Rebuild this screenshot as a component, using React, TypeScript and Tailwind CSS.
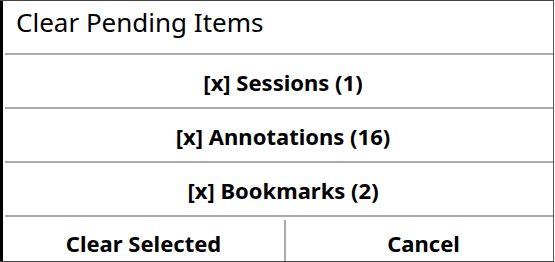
const items = [
  { label: 'Sessions', count: 1 },
  { label: 'Annotations', count: 16 },
  { label: 'Bookmarks', count: 2 },
];

const Separator = () => <div className="ml-[2px] h-[2px] bg-[#aaaaaa]" />;

export default function App() {
  return (
    <div
      className="flex h-[262px] w-[555px] bg-white pr-px text-black"
      style={{ fontFamily: '"Noto Sans", "Open Sans", sans-serif' }}
    >
      <div className="flex flex-1 flex-col border-t border-b border-[#444444]">
        <div className="flex flex-1">
          <div className="w-[3px] bg-black" />
          <div className="flex flex-1 flex-col border-r border-[#555555]">
            {/* Title */}
            <div className="h-[52px] pl-[13px] pt-[8px] text-[26px] leading-[26px]">
              Clear Pending Items
            </div>
            <Separator />

            {/* Pending items */}
            {items.map((item) => (
              <div key={item.label}>
                <div className="flex h-[52px] items-center justify-center pl-[10px] pt-[1px] text-[22px] font-bold leading-none">
                  [x] {item.label} ({item.count})
                </div>
                <Separator />
              </div>
            ))}

            {/* Actions */}
            <div className="flex flex-1">
              <button className="flex w-[281px] items-center justify-center pt-[7px] text-[22px] font-bold leading-none">
                Clear Selected
              </button>
              <div className="mt-[3px] w-[2px] bg-[#aaaaaa]" />
              <button className="flex flex-1 items-center justify-center pl-[8px] pt-[7px] text-[22px] font-bold leading-none">
                Cancel
              </button>
            </div>
          </div>
        </div>
      </div>
    </div>
  );
}
